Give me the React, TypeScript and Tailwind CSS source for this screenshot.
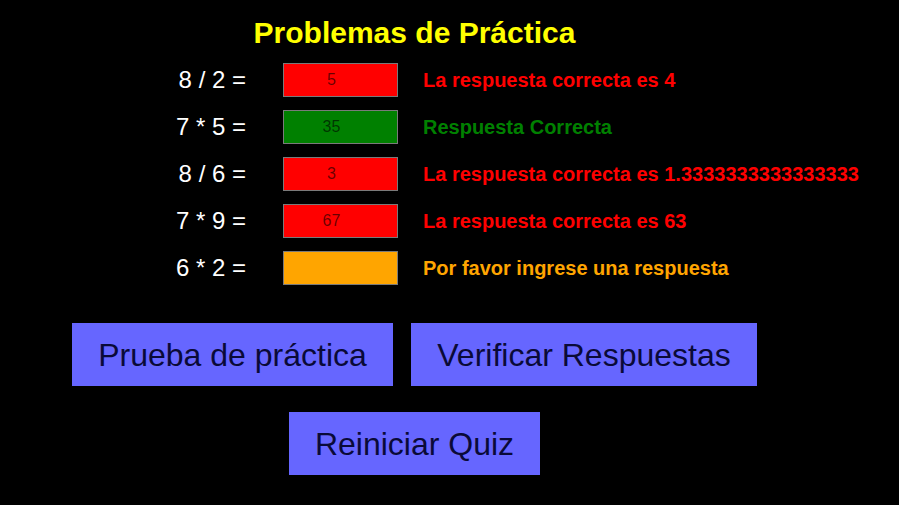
import React from "react";

interface Problema {
  pregunta: string;
  respuesta: string;
  estado: "mal" | "bien" | "vacio";
  mensaje: string;
}

const problemas: Problema[] = [
  { pregunta: "8 / 2 =", respuesta: "5", estado: "mal", mensaje: "La respuesta correcta es 4" },
  { pregunta: "7 * 5 =", respuesta: "35", estado: "bien", mensaje: "Respuesta Correcta" },
  { pregunta: "8 / 6 =", respuesta: "3", estado: "mal", mensaje: "La respuesta correcta es 1.3333333333333333" },
  { pregunta: "7 * 9 =", respuesta: "67", estado: "mal", mensaje: "La respuesta correcta es 63" },
  { pregunta: "6 * 2 =", respuesta: "", estado: "vacio", mensaje: "Por favor ingrese una respuesta" },
];

const fondoInput = {
  mal: "bg-[#ff0000]",
  bien: "bg-[#008000]",
  vacio: "bg-[#ffa500]",
};

const colorMensaje = {
  mal: "text-[#ff0000]",
  bien: "text-[#008000]",
  vacio: "text-[#ffa500]",
};

export default function App() {
  return (
    <div className="min-h-screen bg-black font-['Liberation_Sans',Arial,sans-serif]">
      <div className="flex w-[829px] flex-col items-center">
        {/* TITULO */}
        <h1 className="mt-[16px] text-[30px] font-bold leading-[34px] text-[#ffff00]">Problemas de Práctica</h1>

        {/* PROBLEMAS */}
        <div className="mt-[13px] flex flex-col items-start gap-[13px] self-stretch pl-[138px]">
          {problemas.map((p) => (
            <div key={p.pregunta + p.mensaje} className="flex h-[34px] shrink-0 items-center">
              <span className="w-[108px] shrink-0 whitespace-pre text-right text-[24px] leading-none text-white">{p.pregunta}</span>
              <input
                type="text"
                readOnly
                value={p.respuesta}
                className={`ml-[37px] h-[34px] w-[115px] shrink-0 border border-[#7a7a7a] pr-[18px] text-center text-[16px] text-black/60 outline-none ${fondoInput[p.estado]}`}
              />
              <span className={`ml-[25px] shrink-0 whitespace-nowrap text-[20px] font-bold ${colorMensaje[p.estado]}`}>{p.mensaje}</span>
            </div>
          ))}
        </div>

        {/* BOTONES */}
        <div className="mt-[38px] flex gap-[18px]">
          <button className="h-[63px] w-[321px] bg-[#6666ff] text-[32px] text-[#0a0a38]">Prueba de práctica</button>
          <button className="h-[63px] w-[346px] bg-[#6666ff] text-[32px] text-[#0a0a38]">Verificar Respuestas</button>
        </div>
        <button className="mt-[26px] h-[63px] w-[251px] bg-[#6666ff] text-[32px] text-[#0a0a38]">Reiniciar Quiz</button>
      </div>
    </div>
  );
}
